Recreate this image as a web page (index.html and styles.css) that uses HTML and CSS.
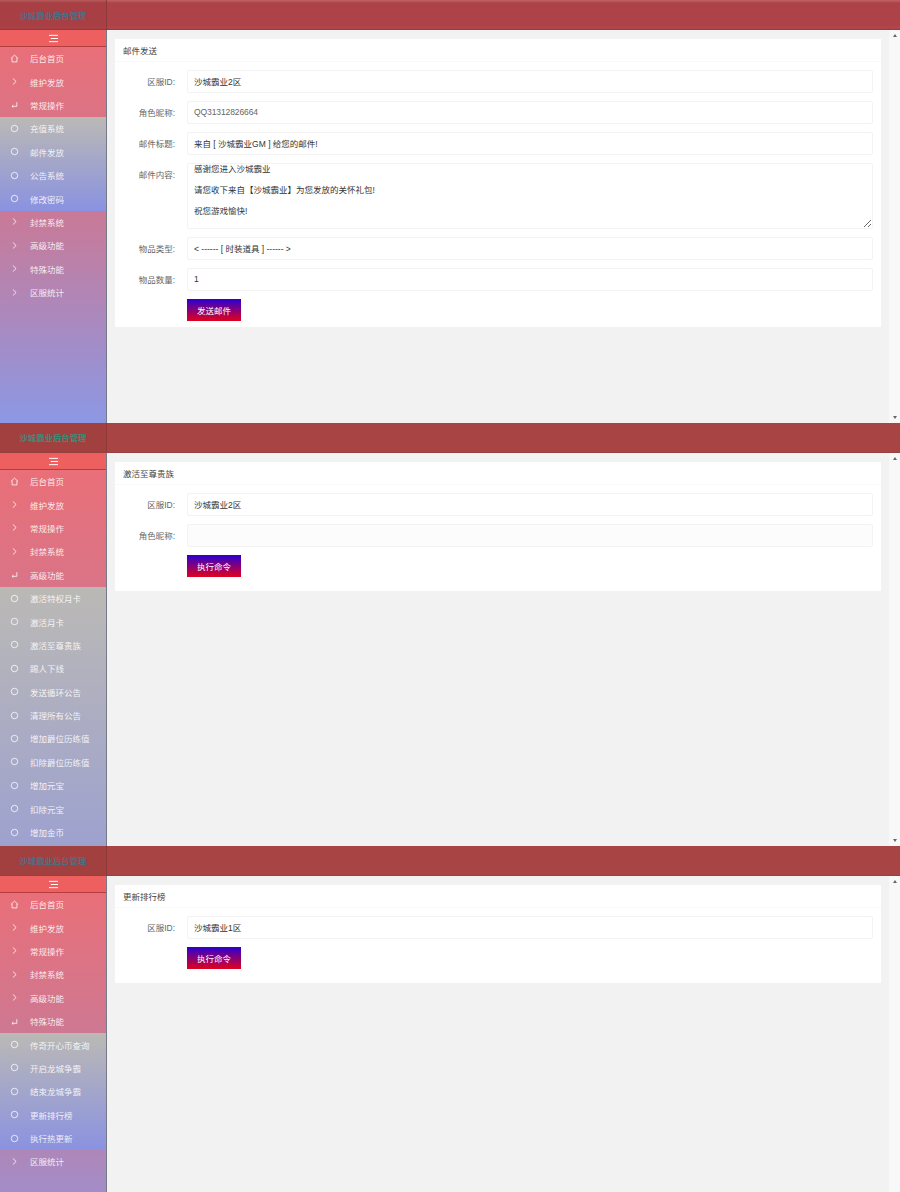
FILE: index.html
```html
<!DOCTYPE html>
<html lang="zh-CN">
<head>
<meta charset="utf-8">
<title>后台管理</title>
<link rel="stylesheet" href="styles.css">
</head>
<body>
<svg class="sprite" aria-hidden="true">
  <symbol id="i-home" viewBox="0 0 10 10"><path d="M1 5 5 1.2 9 5M2.3 4.2V8.8H7.7V4.2"/></symbol>
  <symbol id="i-right" viewBox="0 0 10 10"><path d="M3.2 1.6 6.8 5 3.2 8.4"/></symbol>
  <symbol id="i-open" viewBox="0 0 10 10"><path d="M7.6 2.4V7H2.2M3.8 5.6 2.2 7 3.8 8.4"/></symbol>
  <symbol id="i-dot" viewBox="0 0 10 10"><circle cx="5" cy="5" r="3.6"/></symbol>
  <symbol id="i-menu" viewBox="0 0 12 10"><path d="M1 1.5H11M3 5H11M1 8.5H11"/></symbol>
</svg>

<section class="panel">
  <header class="topbar"><div class="logo">沙城霸业后台管理</div></header>
  <div class="layout">
    <aside class="sidebar">
      <div class="toggle"><svg class="icon-menu"><use href="#i-menu"/></svg></div>
      <nav class="nav">
        <a class="item"><svg class="icon"><use href="#i-home"/></svg>后台首页</a>
        <a class="item"><svg class="icon"><use href="#i-right"/></svg>维护发放</a>
        <a class="item"><svg class="icon"><use href="#i-open"/></svg>常规操作</a>
        <div class="submenu">
          <a class="item"><svg class="icon"><use href="#i-dot"/></svg>充值系统</a>
          <a class="item"><svg class="icon"><use href="#i-dot"/></svg>邮件发放</a>
          <a class="item"><svg class="icon"><use href="#i-dot"/></svg>公告系统</a>
          <a class="item"><svg class="icon"><use href="#i-dot"/></svg>修改密码</a>
        </div>
        <a class="item"><svg class="icon"><use href="#i-right"/></svg>封禁系统</a>
        <a class="item"><svg class="icon"><use href="#i-right"/></svg>高级功能</a>
        <a class="item"><svg class="icon"><use href="#i-right"/></svg>特殊功能</a>
        <a class="item"><svg class="icon"><use href="#i-right"/></svg>区服统计</a>
      </nav>
    </aside>
    <main class="main">
      <div class="card">
        <h2 class="card-title">邮件发送</h2>
        <form class="card-body card-body-tight">
          <div class="row"><label class="label">区服ID:</label><div class="field">沙城霸业2区</div></div>
          <div class="row"><label class="label">角色昵称:</label><div class="field field-muted">QQ31312826664</div></div>
          <div class="row"><label class="label">邮件标题:</label><div class="field">来自 [ 沙城霸业GM ] 给您的邮件!</div></div>
          <div class="row"><label class="label">邮件内容:</label><textarea class="textarea">感谢您进入沙城霸业

请您收下来自【沙城霸业】为您发放的关怀礼包!

祝您游戏愉快!</textarea></div>
          <div class="row"><label class="label">物品类型:</label><div class="field">&lt; ------ [ 时装道具 ] ------ &gt;</div></div>
          <div class="row"><label class="label">物品数量:</label><div class="field">1</div></div>
          <div class="row"><span class="label"></span><button class="btn" type="button">发送邮件</button></div>
        </form>
      </div>
    </main>
    <div class="scrollbar"><i class="arrow-up"></i><i class="arrow-down"></i></div>
  </div>
</section>

<section class="panel">
  <header class="topbar topbar-flat"><div class="logo logo-green">沙城霸业后台管理</div></header>
  <div class="layout">
    <aside class="sidebar">
      <div class="toggle"><svg class="icon-menu"><use href="#i-menu"/></svg></div>
      <nav class="nav">
        <a class="item"><svg class="icon"><use href="#i-home"/></svg>后台首页</a>
        <a class="item"><svg class="icon"><use href="#i-right"/></svg>维护发放</a>
        <a class="item"><svg class="icon"><use href="#i-right"/></svg>常规操作</a>
        <a class="item"><svg class="icon"><use href="#i-right"/></svg>封禁系统</a>
        <a class="item"><svg class="icon"><use href="#i-open"/></svg>高级功能</a>
        <div class="submenu submenu-long">
          <a class="item"><svg class="icon"><use href="#i-dot"/></svg>激活特权月卡</a>
          <a class="item"><svg class="icon"><use href="#i-dot"/></svg>激活月卡</a>
          <a class="item"><svg class="icon"><use href="#i-dot"/></svg>激活至尊贵族</a>
          <a class="item"><svg class="icon"><use href="#i-dot"/></svg>踢人下线</a>
          <a class="item"><svg class="icon"><use href="#i-dot"/></svg>发送循环公告</a>
          <a class="item"><svg class="icon"><use href="#i-dot"/></svg>清理所有公告</a>
          <a class="item"><svg class="icon"><use href="#i-dot"/></svg>增加爵位历练值</a>
          <a class="item"><svg class="icon"><use href="#i-dot"/></svg>扣除爵位历练值</a>
          <a class="item"><svg class="icon"><use href="#i-dot"/></svg>增加元宝</a>
          <a class="item"><svg class="icon"><use href="#i-dot"/></svg>扣除元宝</a>
          <a class="item"><svg class="icon"><use href="#i-dot"/></svg>增加金币</a>
        </div>
      </nav>
    </aside>
    <main class="main">
      <div class="card">
        <h2 class="card-title">激活至尊贵族</h2>
        <form class="card-body">
          <div class="row"><label class="label">区服ID:</label><div class="field">沙城霸业2区</div></div>
          <div class="row"><label class="label">角色昵称:</label><div class="field field-empty"></div></div>
          <div class="row"><span class="label"></span><button class="btn" type="button">执行命令</button></div>
        </form>
      </div>
    </main>
    <div class="scrollbar"><i class="arrow-up"></i><i class="arrow-down"></i></div>
  </div>
</section>

<section class="panel panel-cut">
  <header class="topbar topbar-flat"><div class="logo">沙城霸业后台管理</div></header>
  <div class="layout">
    <aside class="sidebar">
      <div class="toggle"><svg class="icon-menu"><use href="#i-menu"/></svg></div>
      <nav class="nav">
        <a class="item"><svg class="icon"><use href="#i-home"/></svg>后台首页</a>
        <a class="item"><svg class="icon"><use href="#i-right"/></svg>维护发放</a>
        <a class="item"><svg class="icon"><use href="#i-right"/></svg>常规操作</a>
        <a class="item"><svg class="icon"><use href="#i-right"/></svg>封禁系统</a>
        <a class="item"><svg class="icon"><use href="#i-right"/></svg>高级功能</a>
        <a class="item"><svg class="icon"><use href="#i-open"/></svg>特殊功能</a>
        <div class="submenu">
          <a class="item"><svg class="icon"><use href="#i-dot"/></svg>传奇开心币查询</a>
          <a class="item"><svg class="icon"><use href="#i-dot"/></svg>开启龙城争霸</a>
          <a class="item"><svg class="icon"><use href="#i-dot"/></svg>结束龙城争霸</a>
          <a class="item"><svg class="icon"><use href="#i-dot"/></svg>更新排行榜</a>
          <a class="item"><svg class="icon"><use href="#i-dot"/></svg>执行热更新</a>
        </div>
        <a class="item"><svg class="icon"><use href="#i-right"/></svg>区服统计</a>
      </nav>
    </aside>
    <main class="main">
      <div class="card">
        <h2 class="card-title">更新排行榜</h2>
        <form class="card-body">
          <div class="row"><label class="label">区服ID:</label><div class="field">沙城霸业1区</div></div>
          <div class="row"><span class="label"></span><button class="btn" type="button">执行命令</button></div>
        </form>
      </div>
    </main>
    <div class="scrollbar"><i class="arrow-up"></i></div>
  </div>
</section>
</body>
</html>
```

FILE: styles.css
```css
* { box-sizing: border-box; }
html, body { margin: 0; padding: 0; height: 1192px; overflow: hidden; }
body {
  font-family: "Liberation Sans", "Noto Sans CJK SC", sans-serif;
  font-size: 8.5px;
  color: #333;
  background: #f2f2f2;
}
.sprite { position: absolute; width: 0; height: 0; }

.panel { height: 423px; display: flex; flex-direction: column; overflow: hidden; }
.panel-cut { height: 346px; }

.topbar {
  height: 30px;
  flex: none;
  background: linear-gradient(#c06464 0, #ad4349 3px, #ad4349 26px, #b8474c 28px, #8e3a3c 30px);
}
.topbar-flat { background: #a84443; border-bottom: 1px solid #97403f; }
.logo {
  width: 107px;
  height: 100%;
  display: flex;
  align-items: center;
  justify-content: center;
  padding-bottom: 1px;
  font-size: 8.4px;
  font-weight: bold;
  color: #4d6f85;
  background: rgba(120, 40, 40, .12);
  border-right: 1px solid #8e3838;
}
.logo-green { color: #3f8a78; }

.layout { flex: 1; display: flex; min-height: 0; }

.sidebar {
  width: 107px;
  flex: none;
  display: flex;
  flex-direction: column;
  border-right: 1px solid #767a86;
  overflow: hidden;
}
.toggle {
  height: 17px;
  flex: none;
  display: flex;
  align-items: center;
  justify-content: center;
  background: #ee5f5f;
  border-bottom: 1px solid #b53d40;
}
.icon-menu {
  width: 11px;
  height: 9px;
  fill: none;
  stroke: #fff;
  stroke-width: 1.1;
}
.nav {
  flex: 1 0 auto;
  min-height: 376px;
  background: linear-gradient(#e96f78 0, #c87a98 45%, #8c98e4 100%);
}
.item {
  height: 23.4px;
  display: flex;
  align-items: center;
  padding: 0 0 1px 10px;
  color: rgba(255, 255, 255, .86);
  white-space: nowrap;
}
.icon {
  width: 9px;
  height: 9px;
  margin-right: 11px;
  flex: none;
  fill: none;
  stroke: rgba(255, 255, 255, .85);
  stroke-width: 1;
}
.submenu { background: linear-gradient(#bbb9b5 0, #8a92e0 100%); }
.submenu-long { min-height: 430px; }

.main { flex: 1; min-width: 0; padding: 9px 8px 0; background: #f2f2f2; }
.card { background: #fff; }
.card-title {
  margin: 0;
  height: 23px;
  padding: 0 8px 1px;
  display: flex;
  align-items: center;
  font-size: 8.5px;
  font-weight: normal;
  color: #444;
  border-bottom: 1px solid #f8f8f8;
}
.card-body {
  display: flex;
  flex-direction: column;
  gap: 8px;
  padding: 8px 8px 14px 0;
}
.card-body-tight { padding-bottom: 6px; }
.row { display: flex; align-items: flex-start; }
.label {
  width: 60px;
  margin-right: 12px;
  height: 21px;
  flex: none;
  display: flex;
  align-items: center;
  justify-content: flex-end;
  color: #666;
}
.field {
  flex: 1;
  height: 23px;
  display: flex;
  align-items: center;
  padding: 0 6px 2px;
  color: #333;
  background: #fff;
  border: 1px solid #f3f3f3;
  border-radius: 2px;
}
.field-muted { color: #666; letter-spacing: -.1px; }
.field-empty { background: #fcfcfc; }
.textarea {
  flex: 1;
  height: 66px;
  display: block;
  margin: 0;
  padding: 0 6px;
  font: inherit;
  line-height: 10.5px;
  color: #333;
  background: #fff;
  border: 1px solid #f3f3f3;
  border-radius: 2px;
  resize: vertical;
  overflow: hidden;
}
.btn {
  width: 54px;
  height: 22px;
  padding: 0 0 1px;
  border: 0;
  font: inherit;
  color: #fff;
  background: linear-gradient(#2a00d2, #e2001e);
}

.scrollbar {
  width: 11px;
  flex: none;
  display: flex;
  flex-direction: column;
  justify-content: space-between;
  align-items: center;
  padding: 4px 0;
  background: #f8f8f8;
}
.arrow-up, .arrow-down {
  width: 0;
  height: 0;
  border-left: 2.5px solid transparent;
  border-right: 2.5px solid transparent;
}
.arrow-up { border-bottom: 3px solid #666; }
.arrow-down { border-top: 3px solid #666; }
```
